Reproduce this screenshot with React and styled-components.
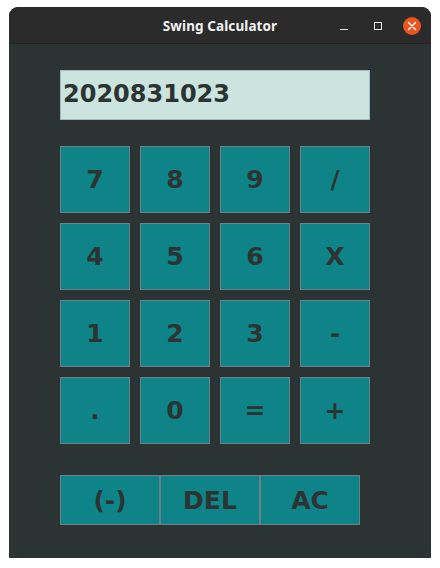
import React from 'react'
import styled, { createGlobalStyle } from 'styled-components'

const GlobalStyle = createGlobalStyle`
  html, body {
    margin: 0;
    padding: 0;
    background: #ffffff;
  }
`

const Page = styled.div`
  padding: 7px 9px 10px 9px;
  width: 422px;
`

const Window = styled.div`
  width: 422px;
  height: 551px;
  border-radius: 9px 9px 0 0;
  overflow: hidden;
  background: #2c3333;
  display: flex;
  flex-direction: column;
`

const TitleBar = styled.div`
  height: 36px;
  background: #2b2b2b;
  border-bottom: 1px solid #232323;
  display: grid;
  grid-template-columns: 1fr auto 1fr;
  align-items: center;
`

const Title = styled.div`
  grid-column: 2;
  color: #f2f2f2;
  font-family: 'Noto Sans', 'DejaVu Sans', sans-serif;
  font-weight: 700;
  font-size: 13.5px;
  letter-spacing: 0.1px;
  padding-top: 2px;
`

const Controls = styled.div`
  grid-column: 3;
  justify-self: end;
  display: flex;
  align-items: center;
  padding-right: 10px;
  padding-top: 2px;
`

const Minimize = styled.span`
  display: block;
  width: 8px;
  height: 1px;
  background: #e8e8e8;
  margin-top: 6px;
  margin-right: 26px;
`

const Maximize = styled.span`
  display: block;
  width: 6px;
  height: 6px;
  border: 1px solid #e8e8e8;
  margin-right: 21px;
`

const Close = styled.span`
  display: flex;
  width: 18px;
  height: 18px;
  border-radius: 50%;
  background: #e95420;
  align-items: center;
  justify-content: center;
`

const Content = styled.div`
  padding: 26px 0 0 51px;
  display: flex;
  flex-direction: column;
`

const Display = styled.div`
  box-sizing: border-box;
  width: 310px;
  height: 50px;
  background: #cbe4de;
  border: 1px solid #a3b8cc;
  color: #2c3333;
  font-family: 'DejaVu Sans', sans-serif;
  font-weight: 700;
  font-size: 24px;
  display: flex;
  align-items: center;
  padding-left: 2px;
  padding-bottom: 2px;
`

const Keypad = styled.div`
  margin-top: 26px;
  display: grid;
  grid-template-columns: repeat(4, 70px);
  grid-auto-rows: 67px;
  gap: 10px;
`

const Key = styled.button`
  box-sizing: border-box;
  margin: 0;
  padding: 0;
  width: ${p => p.$wide ? '100px' : '70px'};
  height: ${p => p.$wide ? '50px' : '67px'};
  background: #0e8388;
  border: 1px solid #6e7f8c;
  color: #2c3333;
  font-family: 'DejaVu Sans', sans-serif;
  font-weight: 700;
  font-size: 25px;
  display: flex;
  align-items: center;
  justify-content: center;
`

const Actions = styled.div`
  margin-top: 31px;
  display: flex;
`

const keys = ['7', '8', '9', '/', '4', '5', '6', 'X', '1', '2', '3', '-', '.', '0', '=', '+']
const actions = ['(-)', 'DEL', 'AC']

export default function App() {
  return (
    <Page>
      <GlobalStyle />
      <Window>
        <TitleBar>
          <Title>Swing Calculator</Title>
          <Controls>
            <Minimize />
            <Maximize />
            <Close>
              <svg width="10" height="10" viewBox="0 0 10 10">
                <path d="M1.5 1.5 L8.5 8.5 M8.5 1.5 L1.5 8.5" stroke="#ffffff" strokeWidth="1.4" strokeLinecap="round" />
              </svg>
            </Close>
          </Controls>
        </TitleBar>
        <Content>
          <Display>2020831023</Display>
          <Keypad>
            {keys.map(k => <Key key={k}>{k}</Key>)}
          </Keypad>
          <Actions>
            {actions.map(a => <Key key={a} $wide>{a}</Key>)}
          </Actions>
        </Content>
      </Window>
    </Page>
  )
}
